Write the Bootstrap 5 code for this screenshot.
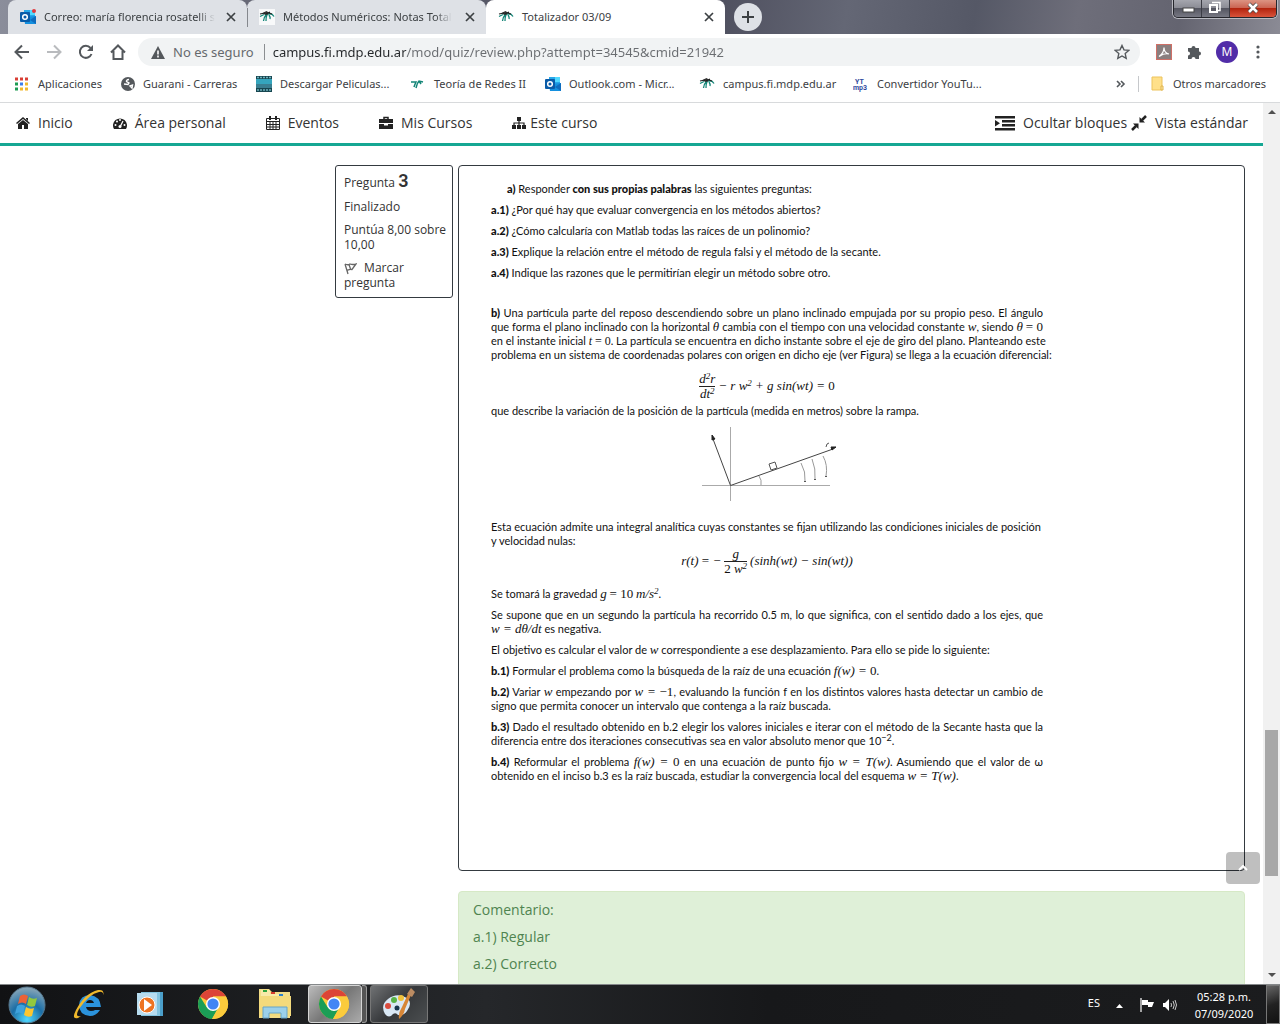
<!DOCTYPE html>
<html lang="es">
<head>
<meta charset="utf-8">
<meta name="viewport" content="width=device-width, initial-scale=1">
<title>Totalizador 03/09</title>
<link href="https://cdn.jsdelivr.net/npm/bootstrap@5.3.0/dist/css/bootstrap.min.css" rel="stylesheet">
<style>
body{font-family:"Open Sans","Noto Sans",sans-serif;font-size:14px;line-height:20px;color:#333;background:#fff}
button{background:none;border:0;padding:0;color:inherit}
a{color:inherit;text-decoration:none}
svg{display:block;flex:none}
.ui{font-family:"Noto Sans","Open Sans",sans-serif;font-size:11px;line-height:16px;color:#3c4043}
/* window frame and tabs */
.titlebar{height:34px;padding-left:8px;background:linear-gradient(100deg,#8b8e9b 0,#5c5d6b 25%,#4f505f 56%,#646775 66%,#555866 76%,#6e6e7a 84%,#646470 92%,#8b8b95 100%)}
.tab-item{width:239px;padding:0 11px 0 12px;background:#dee1e6;border-radius:8px 8px 0 0}
.tab-item.current{background:#fff}
.tab-item+.tab-item:not(.current){position:relative}
.tab-item+.tab-item:not(.current)::before{content:"";position:absolute;left:0;top:8px;height:19px;border-left:1px solid #85888d}
.tab-title{white-space:nowrap}
.faded{-webkit-mask-image:linear-gradient(90deg,#000 90%,transparent)}
.newtab{width:28px;height:28px;border-radius:50%;background:#dee1e6;margin:3px 0 0 9px}
.winbtns{height:18px;margin-right:3px;border:1px solid #25262c;border-top:0;border-radius:0 0 5px 5px;overflow:hidden;box-shadow:0 0 0 1px #b9bac1}
.winbtns button{width:28px;background:linear-gradient(#a5a6ae 0,#8a8b94 48%,#555661 50%,#777883);border-right:1px solid #3b3c45}
.winbtns .shut{width:46px;border:0;background:linear-gradient(#dc9483 0,#ca6250 48%,#b3250f 50%,#d9533a)}
/* toolbar */
.toolbar{height:36px;padding:0 16px 0 14px}
.tools{gap:14px}
.omnibox{height:28px;border-radius:14px;background:#f1f3f4;padding:0 10px 0 13px;margin-left:12px;margin-right:16px;font-size:13px;line-height:20px;color:#666a6e}
.omnibox label{border-right:1px solid #8b8e91;padding-right:10px;line-height:16px}
.url{border:0;outline:0;padding:0;min-width:0;color:transparent;background:linear-gradient(90deg,#24272a 133px,#6a6d71 133px);-webkit-background-clip:text;background-clip:text}
.avatar{width:22px;height:22px;border-radius:50%;background:#512da8;color:#fff;font-size:12px}
.bookmarks{height:33px;padding:0 14px 4px;border-bottom:1px solid #d8dadc}
.bm{white-space:nowrap;gap:8px}
.bm-s{width:107px}.bm-m{width:135px}.bm-l{width:154px}
.folder{border-left:1px solid #c6c8cb;padding-left:12px}
/* campus page */
.viewport{min-height:0}
.sitenav{height:43px;border-bottom:3px solid #15a793;padding:0 15px 0 16px}
.sitenav nav{gap:40px}
.sitenav a{color:#333}
.content-area{padding:19px 18px 0 0;gap:5px}
.blocks-gap{width:330px}
.info{width:118px;border:1px solid #343a40;border-radius:3px;padding:5px 2px 7px 8px;font-size:12px;line-height:15px}
.info p{margin-bottom:8px}
.info b{font-family:Roboto,sans-serif;font-size:18px;font-weight:600;line-height:20px}
.answer{border:1px solid #343a40;border-radius:4px;padding:16px 32px 80px;color:#111}
.doc{width:552px;font-family:Lato,"Open Sans",sans-serif;font-size:11px;line-height:14px}
.doc p{margin-bottom:7px;white-space:nowrap}
.doc p.part-b{margin:26px 0 0}
.doc p.integral{margin:18px 0 0}
.doc b{font-weight:900}
.fill{display:block;text-align-last:justify}
.doc i,.eq{font-family:"Liberation Serif",serif;font-size:13px;line-height:10px}
.part-b .snug i{font-size:12px}
.eq{gap:3px}
.eq i{line-height:14px}
.eq-first{height:42px;padding-top:6px}
.eq-second{height:26px;margin-bottom:13px}
.doc sup,.eq sup{font-size:9px;line-height:0;top:-4px}
.doc i.n{font-style:normal}
.frac{display:inline-flex;flex-direction:column;text-align:center}
.frac>i:first-child{border-bottom:1px solid #222}
.figure-wrap{padding-left:6px}
.feedback{background:#dff0d8;border:1px solid #d6e9c6;border-radius:4px;margin-top:20px;padding:8px 14px;color:#4f8450}
.feedback p{margin-bottom:7px}
.sbar{width:17px;background:#f1f1f1}
.sbar button{height:17px}
.thumb{background:#a8a8a8;flex:146 0 0;margin:0 2px}
.totop{position:absolute;right:20px;bottom:100px;width:34px;height:32px;border-radius:4px;background:rgba(0,0,0,.25)}
/* taskbar */
.taskbar{height:40px;background:linear-gradient(90deg,#111214,#25272a 38%,#17181a 60%,#1b1c1e);border-top:1px solid #85888a;color:#fff;padding-left:4px}
.task{width:62px;height:38px}
.task.on{width:54px;margin-left:2px;border:1px solid #d5d5d5;border-radius:3px;background:linear-gradient(135deg,#bbb,#777 50%,#aaa)}
.task.open{width:58px;border:1px solid #777;border-radius:3px;background:linear-gradient(135deg,#707274,#35373a 50%,#4b4e50)}
.stack{width:5px;height:38px;border:1px solid #999;border-left:0;border-radius:0 3px 3px 0;background:#555;margin-right:3px}
.desk{width:14px;border:1px solid #777;background:linear-gradient(160deg,#666,#222 50%,#111)}
.clock{line-height:17px;width:76px;margin-right:4px}
</style>
</head>
<body class="d-flex flex-column vh-100 overflow-hidden">
<svg width="0" height="0" class="position-absolute">
<symbol id="palm" viewBox="0 0 16 16"><path d="M3.500 4l4-2 3 2-3 3z" fill="#333"/><path d="M1 7.500l4-2M7 6q-2 2-2.500 6M8 5.500Q7 8 7 12M9 5q4-1 6 2.500M10 6q1.500 2 1 4" fill="none" stroke="#138577" stroke-width="1.300"/><path d="M1 5l5-1M7 5l4-2M10 4l3 1" stroke="#222" stroke-width="1.200"/></symbol>
<symbol id="outlook" viewBox="0 0 16 16"><path d="M4 1h11v11H4z" fill="#28a8ea"/><path d="M10 1h5v5h-5z" fill="#50d9ff"/><path d="M4 8l12-1v8H5z" fill="#1490df"/><path d="M10 11l6-4v8z" fill="#0f6cbd"/><rect y="3" width="10" height="10" rx="1" fill="#0a5ca8"/><circle cx="5" cy="8" r="2.3" fill="none" stroke="#fff" stroke-width="1.5"/></symbol>
<symbol id="cross" viewBox="0 0 10 10"><path d="M1 1l8 8M9 1L1 9" stroke="#3c4043" stroke-width="1.7"/></symbol>
<symbol id="chrome" viewBox="0 0 32 32"><circle cx="16" cy="16" r="15" fill="#fbcb3c"/><path d="M16 16L3 8.500A15 15 0 0 1 29 8.500H16z" fill="#dc4437"/><path d="M3 8.500A15 15 0 0 0 15 31l6.500-12L16 16 9.500 19z" fill="#1b9e56"/><path d="M16 8.500h13A15 15 0 0 1 15 31l7-12z" fill="#fbcb3c"/><circle cx="16" cy="16" r="7" fill="#fff"/><circle cx="16" cy="16" r="5.600" fill="#4285f4"/></symbol>
</svg>

<header class="ui flex-shrink-0">
<div class="titlebar d-flex">
<div class="tab-item d-flex align-items-center"><svg width="16" height="16"><use href="#outlook"/><circle cx="14" cy="2" r="2" fill="#e0393e"/></svg><span class="tab-title ms-2 faded">Correo: maría florencia rosatelli s</span><button class="ms-auto" aria-label="Cerrar"><svg width="10" height="10"><use href="#cross"/></svg></button></div>
<div class="tab-item d-flex align-items-center"><svg width="16" height="16" class="bg-light"><use href="#palm"/></svg><span class="tab-title ms-2 faded">Métodos Numéricos: Notas Total</span><button class="ms-auto" aria-label="Cerrar"><svg width="10" height="10"><use href="#cross"/></svg></button></div>
<div class="tab-item current d-flex align-items-center"><svg width="16" height="16"><use href="#palm"/></svg><span class="tab-title ms-2">Totalizador 03/09</span><button class="ms-auto" aria-label="Cerrar"><svg width="10" height="10"><use href="#cross"/></svg></button></div>
<button class="newtab d-flex align-items-center justify-content-center" aria-label="Nueva pestaña"><svg width="12" height="12"><path d="M6 0v12M0 6h12" stroke="#3c4043" stroke-width="2"/></svg></button>
<div class="winbtns d-flex ms-auto">
<button aria-label="Minimizar"><svg width="27" height="17"><rect x="9" y="8" width="11" height="4" fill="#fff" stroke="#444"/></svg></button>
<button aria-label="Restaurar"><svg width="27" height="17"><path d="M10 2.500h8v8h-2" fill="none" stroke="#fff" stroke-width="1.500"/><rect x="8" y="5" width="7" height="7" fill="none" stroke="#fff" stroke-width="2"/></svg></button>
<button class="shut" aria-label="Cerrar ventana"><svg width="46" height="17"><path d="M19 4l8 8M27 4l-8 8" stroke="#444" stroke-width="4"/><path d="M19 4l8 8M27 4l-8 8" stroke="#fff" stroke-width="2.600"/></svg></button>
</div>
</div>
<div class="toolbar d-flex align-items-center">
<div class="d-flex gap-3">
<button aria-label="Atrás"><svg width="16" height="16" fill="none" stroke="#54585c" stroke-width="2"><path d="M15 8H2M8 1.500L1.500 8 8 14.500"/></svg></button>
<button aria-label="Adelante"><svg width="16" height="16" fill="none" stroke="#b9bbbe" stroke-width="2"><path d="M1 8h13M8 1.500L14.500 8 8 14.500"/></svg></button>
<button aria-label="Recargar"><svg width="16" height="16" fill="none" stroke="#54585c" stroke-width="2"><path d="M13.500 10A6 6 0 1 1 12.500 4"/><path d="M15 1v6H9z" fill="#54585c" stroke="none"/></svg></button>
<button aria-label="Inicio"><svg width="16" height="16" fill="none" stroke="#54585c" stroke-width="2"><path d="M1 8.500L8 1.500l7 7M3.500 7v8h9V7"/></svg></button>
</div>
<div class="omnibox d-flex align-items-center flex-fill">
<svg width="14" height="13" class="me-2"><path d="M7 0l7 13H0z" fill="#54585c"/><path d="M7 4.500v4M7 9.500v2" stroke="#fff" stroke-width="1.600"/></svg>
<label for="url">No es seguro</label>
<input id="url" class="url flex-fill ms-2" value="campus.fi.mdp.edu.ar/mod/quiz/review.php?attempt=34545&amp;cmid=21942">
<button aria-label="Marcar página"><svg width="16" height="16" viewBox="0 0 16 16"><path d="M8 1.500l2 4.400 4.800.5-3.600 3.200 1 4.800L8 12l-4.200 2.400 1-4.800L1.200 6.400 6 5.900z" fill="none" stroke="#54585c" stroke-width="1.400"/></svg></button>
</div>
<div class="tools d-flex align-items-center">
<svg width="16" height="16"><rect x=".5" y=".5" width="15" height="15" fill="#8a7f7f" stroke="#cf6f66"/><path d="M3 12.500Q8 9 8 3.500q0 5.500 5 6.500-5-1-9 2z" fill="none" stroke="#fff" stroke-width="1.200"/></svg>
<svg width="16" height="16" fill="#54585c"><path d="M2 4h3.500a2 2 0 1 1 4 0H13v3.500a2 2 0 1 1 0 4V15H9.500a2 2 0 1 0-4 0H2v-3.500a2 2 0 1 0 0-4z"/></svg>
<button class="avatar">M</button>
<button aria-label="Menú" class="px-1"><svg width="4" height="14" fill="#54585c"><circle cx="2" cy="2" r="1.600"/><circle cx="2" cy="7" r="1.600"/><circle cx="2" cy="12" r="1.600"/></svg></button>
</div>
</div>
<div class="bookmarks d-flex align-items-center">
<a href="#" class="bm bm-s d-flex align-items-center"><svg width="16" height="16"><path d="M1 3h3M6 3h3M11 3h3" stroke="#d93f35" stroke-width="3"/><path d="M1 8h3M1 13h3" stroke="#1e9b53" stroke-width="3"/><path d="M6 8h3" stroke="#3b7ded" stroke-width="3"/><path d="M11 8h3M6 13h3M11 13h3" stroke="#f1b82c" stroke-width="3"/></svg>Aplicaciones</a>
<a href="#" class="bm bm-m d-flex align-items-center"><svg width="14" height="14"><circle cx="7" cy="7" r="7" fill="#54585c"/><path d="M8 2.500q-3 .5-2.500 2L8 6l-1 1.500-4-.5M9 9l2.500-1-.5 3z" fill="none" stroke="#fff" stroke-width="1.400"/></svg>Guarani - Carreras</a>
<a href="#" class="bm bm-l d-flex align-items-center"><svg width="16" height="16"><path d="M0 0h16v16H0z" fill="#174650"/><path d="M0 4h16v8H0z" fill="#3a7f91"/><path d="M0 3h16v5H0z" fill="#35a5bd"/><path d="M1 1.500h15M1 14h15" stroke="#6fb0ba" stroke-width="1.500" stroke-dasharray="2 1"/></svg>Descargar Peliculas...</a>
<a href="#" class="bm bm-m d-flex align-items-center"><svg width="16" height="16" fill="none" stroke="#138577" stroke-width="1.500"><path d="M1 6h5q-1 2-2 5M13 6L9 5q-2 2-3 7M9 5l2 3"/></svg>Teoría de Redes II</a>
<a href="#" class="bm bm-l d-flex align-items-center"><svg width="16" height="16"><use href="#outlook"/></svg>Outlook.com - Micr...</a>
<a href="#" class="bm bm-l d-flex align-items-center"><svg width="16" height="16"><use href="#palm"/></svg>campus.fi.mdp.edu.ar</a>
<a href="#" class="bm d-flex align-items-center"><svg width="16" height="16" font-family="Roboto,sans-serif" font-weight="700" font-size="7" fill="#2f4a9e"><text x="2" y="8">YT</text><text x="0" y="14">mp3</text></svg>Convertidor YouTu...</a>
<button class="ms-auto me-2 pe-1" aria-label="Más marcadores"><svg width="10" height="8" fill="none" stroke="#54585c" stroke-width="1.600"><path d="M1 1l3 3-3 3M5 1l3 3-3 3"/></svg></button>
<a href="#" class="bm folder d-flex align-items-center"><svg width="14" height="16"><path d="M1 1h10v13H1z" fill="#ffe08a" stroke="#edc35d"/><path d="M10 10h2v4h-2z" fill="#ffe9a8" stroke="#e0b44c"/></svg>Otros marcadores</a>
</div>
</header>

<div class="viewport d-flex flex-fill position-relative">
<div class="flex-fill overflow-hidden">
<div class="sitenav d-flex align-items-center justify-content-between">
<nav class="d-flex">
<a href="#" class="d-flex align-items-center"><svg width="14" height="14" class="me-2" fill="#222"><path d="M7 1l7 6-1 1-6-5-6 5-1-1zM10 2h2v3l-2-2zM2 8l5-4 5 4v5H8V9H6v4H2z"/></svg>Inicio</a>
<a href="#" class="d-flex align-items-center"><svg width="14" height="14" class="me-2"><path d="M1 13a7 7 0 1 1 12 0z" fill="#222"/><g fill="#fff"><circle cx="2.500" cy="9" r="1"/><circle cx="4" cy="5.500" r="1"/><circle cx="7" cy="4" r="1"/><circle cx="11.500" cy="9" r="1"/></g><path d="M7 11l3-6" stroke="#fff" stroke-width="1.200"/><circle cx="7" cy="10.500" r="1.500" fill="#fff"/></svg>Área personal</a>
<a href="#" class="d-flex align-items-center"><svg width="14" height="14" class="me-2" fill="none" stroke="#222"><path d="M.500 2.500h13v11H.500zM1 5.500h12M1 8.500h12M1 11h12M4 5v8M7 5v8M10 5v8"/><path d="M4 0v4M10 0v4" stroke-width="2"/></svg>Eventos</a>
<a href="#" class="d-flex align-items-center"><svg width="14" height="14" class="me-2"><path d="M0 3h14v4H0zM0 8h5v1.500h4V8h5v5H0z" fill="#222"/><path d="M5 3V1.500h4V3" fill="none" stroke="#222" stroke-width="1.500"/></svg>Mis Cursos</a>
<a href="#" class="d-flex align-items-center"><svg width="14" height="14" class="me-1" fill="#222"><path d="M5 1h4v4H5zM0 9h4v4H0zM5 9h4v4H5zM10 9h4v4h-4z"/><path d="M7 5v4M2 9V7h10v2" fill="none" stroke="#222" stroke-width="1.200"/></svg>Este curso</a>
</nav>
<div class="d-flex">
<a href="#" class="d-flex align-items-center"><svg width="20" height="15" class="me-2" fill="#222"><path d="M0 0h20v2.500H0zM7 4h13v2.500H7zM7 8h13v2.500H7zM0 12h20v2.500H0zM0 4l5 3.300L0 10.500z"/></svg>Ocultar bloques</a>
<a href="#" class="d-flex align-items-center ms-1"><svg width="16" height="16" class="me-2"><path d="M8.500 7.500V2l5.500 5.500zM7.500 8.500V14L2 8.500z" fill="#222"/><path d="M15 1l-4 4M1 15l4-4" stroke="#222" stroke-width="2.500"/></svg>Vista estándar</a>
</div>
</div>
<main class="content-area d-flex align-items-start">
<div class="blocks-gap flex-shrink-0"></div>
<section class="info flex-shrink-0">
<p>Pregunta <b>3</b></p>
<p>Finalizado</p>
<p>Puntúa 8,00 sobre 10,00</p>
<a href="#"><svg width="13" height="12" class="d-inline me-1" viewBox="0 0 13 12"><path d="M1 1l3 10M1 1q3 1.500 5 0 3 1 6 0L8 6.500q-2-.5-5 1M5 1.500L6.500 6" fill="none" stroke="#666" stroke-width="1.300"/></svg> Marcar<br>pregunta</a>
</section>
<div class="flex-fill">
<section class="answer">
<div class="doc">
<p class="ps-3"><b>a)</b> Responder <b>con sus propias palabras</b> las siguientes preguntas:</p>
<p><b>a.1)</b> ¿Por qué hay que evaluar convergencia en los métodos abiertos?</p>
<p><b>a.2)</b> ¿Cómo calcularía con Matlab todas las raíces de un polinomio?</p>
<p><b>a.3)</b> Explique la relación entre el método de regula falsi y el método de la secante.</p>
<p><b>a.4)</b> Indique las razones que le permitirían elegir un método sobre otro.</p>
<p class="part-b"><span class="fill"><b>b)</b> Una partícula parte del reposo descendiendo sobre un plano inclinado empujada por su propio peso. El ángulo</span>
<span class="fill">que forma el plano inclinado con la horizontal <i>θ</i> cambia con el tiempo con una velocidad constante <i>w</i>, siendo <i>θ</i> <i class="n">= 0</i></span>
<span class="fill snug">en el instante inicial <i>t</i> <i class="n">= 0</i>. La partícula se encuentra en dicho instante sobre el eje de giro del plano. Planteando este</span>
<span class="fill">problema en un sistema de coordenadas polares con origen en dicho eje (ver Figura) se llega a la ecuación diferencial:</span></p>
<div class="eq eq-first d-flex align-items-center justify-content-center"><span class="frac"><i>d<sup>2</sup>r</i><i>dt<sup>2</sup></i></span><i>− r w<sup>2</sup> + g sin(wt) = <i class="n">0</i></i></div>
<p>que describe la variación de la posición de la partícula (medida en metros) sobre la rampa.</p>
<div class="figure-wrap"><svg width="136" height="77" class="mx-auto" fill="none" stroke="#777"><path d="M0 60.500h128M28.500 2v74" stroke="#aaa"/><path d="M28.500 60.500L11 14M28.500 60.500L131 24" stroke="#444"/><path d="M10 10l3 4-3 1zM134 22l-4 3-1-3z" fill="#222" stroke="#222"/><path d="M67 39l6-2 2 6-6 2z" stroke="#555"/><path d="M57 51q3 4 2 9M99 38q5 9 4 18M110 34q4 10 3 20M121 31q5 9 3 20" stroke="#999"/><path d="M103 56v1M113 54v1M124 51v1" stroke="#555" stroke-width="2"/><path d="M124 22l1-3 2-1" stroke="#555"/></svg></div>
<p class="integral">Esta ecuación admite una integral analítica cuyas constantes se fijan utilizando las condiciones iniciales de posición<br>y velocidad nulas:</p>
<div class="eq eq-second d-flex align-items-center justify-content-center"><i>r(t) <i class="n">=</i> −</i><span class="frac"><i>g</i><i><i class="n">2</i> w<sup>2</sup></i></span><i>(sinh(wt) − sin(wt))</i></div>
<p>Se tomará la gravedad <i>g</i> <i class="n">= 10</i> <i>m/s<sup>2</sup></i>.</p>
<p><span class="fill">Se supone que en un segundo la partícula ha recorrido 0.5 m, lo que significa, con el sentido dado a los ejes, que</span><i>w = dθ/dt</i> es negativa.</p>
<p>El objetivo es calcular el valor de <i>w</i> correspondiente a ese desplazamiento. Para ello se pide lo siguiente:</p>
<p><b>b.1)</b> Formular el problema como la búsqueda de la raíz de una ecuación <i>f(w) = </i><i class="n">0</i>.</p>
<p><span class="fill"><b>b.2)</b> Variar <i>w</i> empezando por <i>w = </i><i class="n">−1</i>, evaluando la función f en los distintos valores hasta detectar un cambio de</span>signo que permita conocer un intervalo que contenga a la raíz buscada.</p>
<p><span class="fill"><b>b.3)</b> Dado el resultado obtenido en b.2 elegir los valores iniciales e iterar con el método de la Secante hasta que la</span>diferencia entre dos iteraciones consecutivas sea en valor absoluto menor que 10<sup>−2</sup>.</p>
<p><span class="fill"><b>b.4)</b> Reformular el problema <i>f(w) = </i><i class="n">0</i> en una ecuación de punto fijo <i>w = T(w)</i>. Asumiendo que el valor de ω</span>obtenido en el inciso b.3 es la raíz buscada, estudiar la convergencia local del esquema <i>w = T(w)</i>.</p>
</div>
</section>
<section class="feedback">
<p>Comentario:</p>
<p>a.1) Regular</p>
<p>a.2) Correcto</p>
<p>a.3) Regular</p>
</section>
</div>
</main>
</div>
<div class="sbar d-flex flex-column flex-shrink-0">
<button aria-label="Subir"><svg width="17" height="17"><path d="M5 11h8L9 7z" fill="#505050"/></svg></button>
<div style="flex:610 0 0"></div><div class="thumb"></div><div style="flex:91 0 0"></div>
<button aria-label="Bajar"><svg width="17" height="17"><path d="M5 6h8l-4 4z" fill="#505050"/></svg></button>
</div>
<button class="totop d-flex align-items-center justify-content-center" aria-label="Volver arriba"><svg width="10" height="6"><path d="M1 5l4-4 4 4" fill="none" stroke="#fff" stroke-width="2"/></svg></button>
</div>

<footer class="taskbar ui d-flex flex-shrink-0">
<button aria-label="Inicio de Windows"><svg width="46" height="38" viewBox="0 0 46 38"><defs><radialGradient id="orb" cx=".5" cy=".9" r=".9"><stop offset="0" stop-color="#4fd8ff"/><stop offset=".5" stop-color="#1b6ea6"/><stop offset="1" stop-color="#8fa9b8"/></radialGradient></defs><circle cx="23" cy="19" r="18" fill="url(#orb)" stroke="#56778d"/><path d="M16 10q4-3 8 0l-2 8q-4-3-8 0z" fill="#ec6237"/><path d="M25 11q4 3 8 1l-2 8q-4 2-8-1z" fill="#92c83e"/><path d="M13 20q4-3 8 0l-2 8q-4-3-8 0z" fill="#3fa2dc"/><path d="M22 21q4 3 8 1l-2 8q-4 2-8-1z" fill="#fdc62f"/></svg></button>
<button class="task ms-2" aria-label="Internet Explorer"><svg width="62" height="38" viewBox="0 0 62 38"><path d="M42 25q-4 6-10 6-11-1-11-11 1-10 11-10 10 1 11 12H28q1 4 5 4 3 0 4-1z" fill="#2b93dc"/><path d="M28 18h8q-1-3-4-3t-4 3z" fill="#131416"/><path d="M20 33q-7 2-2-8Q27 8 40 5q7-1 5 6 1-5-4-4Q31 9 21 24q-5 9 2 7z" fill="#f0b92c"/></svg></button>
<button class="task" aria-label="Reproductor multimedia"><svg width="62" height="38"><path d="M24 7h19v24H24z" fill="#4b9fca"/><path d="M21 7h19v24H21z" fill="#83c3df"/><path d="M17 8h20v22H17z" fill="#b7dcef"/><circle cx="27" cy="20" r="8" fill="#ee7423" stroke="#fff"/><path d="M24 14l8 6-8 6z" fill="#fff"/></svg></button>
<button class="task" aria-label="Chrome"><svg width="62" height="38"><use href="#chrome" x="15" y="3" width="32" height="32"/></svg></button>
<button class="task" aria-label="Explorador"><svg width="62" height="38"><path d="M15 4h10l3 3h18v26H15z" fill="#f2dc87"/><path d="M17 5h9v4h9v3h10v19H17z" fill="#f8eaa9"/><path d="M15 11h32v20H15z" fill="#f3da7c"/><path d="M19 6h4" stroke="#2ea53e" stroke-width="2"/><path d="M27 8h4" stroke="#d53c2e" stroke-width="2"/><path d="M35 10h4" stroke="#2b80cc" stroke-width="2"/><path d="M19 33V22h24v11h-6v-5H25v5z" fill="#9bd0ea" stroke="#67a5c8"/></svg></button>
<button class="task on" aria-label="Chrome abierto"><svg width="52" height="36"><use href="#chrome" x="9" y="2" width="32" height="32"/></svg></button><span class="stack"></span>
<button class="task open" aria-label="Paint"><svg width="56" height="36"><path d="M14 28q-5-9 3-15 9-7 19-1 6 5 0 13-3 5-9 4-2-3-5-1-4 5-8 0z" fill="#d9e8f5"/><circle cx="17" cy="20" r="3" fill="#d94b3e"/><circle cx="23" cy="14" r="3" fill="#58b347"/><circle cx="30" cy="12" r="3" fill="#f0c23a"/><circle cx="26" cy="22" r="2.500" fill="#18364f"/><path d="M28 33q-1-6 3-12l6-13 3 1-6 14q-1 6-6 10z" fill="#d78636"/><path d="M36 8l4-6 4 4-3 5z" fill="#bb8b62"/></svg></button>
<div class="d-flex align-items-center ms-auto">
<span class="me-3 pb-1">ES</span>
<svg width="8" height="16" class="me-3"><path d="M0 11h7L3.500 7z" fill="#fff"/></svg>
<svg width="14" height="16" class="me-2"><path d="M1 1v14" stroke="#fff" stroke-width="1.200"/><path d="M2 3h6v2h6l-2 5H8V8H2z" fill="#fff"/></svg>
<svg width="16" height="16" class="me-2"><path d="M1 6h2l4-4v12l-4-4H1z" fill="#fff"/><path d="M9 6q1 2 0 4M11 4q2.500 4 0 8M13 3q3 5 0 10" fill="none" stroke="#ccc"/></svg>
<div class="clock text-center">05:28 p.m.<br>07/09/2020</div>
</div>
<button class="desk" aria-label="Mostrar escritorio"></button>
</footer>
<script src="https://cdn.jsdelivr.net/npm/bootstrap@5.3.0/dist/js/bootstrap.bundle.min.js"></script>
</body>
</html>
